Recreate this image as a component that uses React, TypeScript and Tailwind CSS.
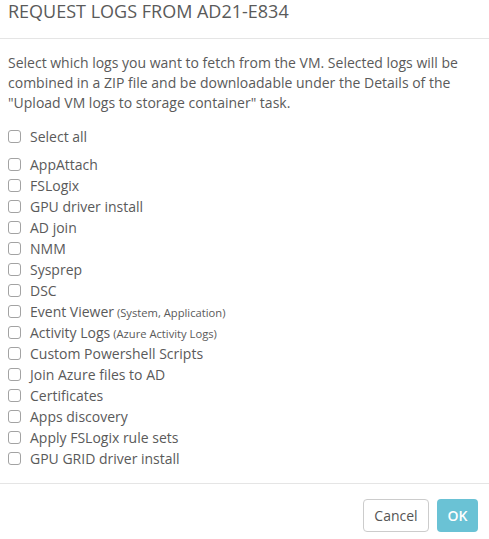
import React from "react";

const logs: { label: string; note?: string }[] = [
  { label: "AppAttach" },
  { label: "FSLogix" },
  { label: "GPU driver install" },
  { label: "AD join" },
  { label: "NMM" },
  { label: "Sysprep" },
  { label: "DSC" },
  { label: "Event Viewer", note: "(System, Application)" },
  { label: "Activity Logs", note: "(Azure Activity Logs)" },
  { label: "Custom Powershell Scripts" },
  { label: "Join Azure files to AD" },
  { label: "Certificates" },
  { label: "Apps discovery" },
  { label: "Apply FSLogix rule sets" },
  { label: "GPU GRID driver install" },
];

function CheckRow({ label, note }: { label: string; note?: string }) {
  return (
    <label className="flex items-center h-[21px] leading-[21px] cursor-pointer">
      <span className="w-[13px] h-[13px] shrink-0 rounded-[3px] border border-[#a3a3a3] bg-white" />
      <span className="ml-[9px] text-[14px] whitespace-nowrap">
        {label}
        {note && <span className="text-[11.2px]"> {note}</span>}
      </span>
    </label>
  );
}

export default function App() {
  return (
    <div
      className="w-[489px] h-[539px] bg-white text-[#5a5a5a] flex flex-col"
      style={{ fontFamily: '"Open Sans", "Liberation Sans", sans-serif' }}
    >
      <div className="h-[39px] px-[8px] pt-[1px] border-b border-[#e5e5e5] shrink-0">
        <h1 className="text-[18px] leading-[20px] font-normal">REQUEST LOGS FROM AD21-E834</h1>
      </div>

      <div className="px-[8px] pt-[14px] flex-1">
        <p className="text-[14px] leading-[20px]">
          Select which logs you want to fetch from the VM. Selected logs will be combined in a ZIP file and be
          downloadable under the Details of the "Upload VM logs to storage container" task.
        </p>
        <div className="mt-[13px] mb-[7px]">
          <CheckRow label="Select all" />
        </div>
        <div>
          {logs.map((l) => (
            <CheckRow key={l.label} label={l.label} note={l.note} />
          ))}
        </div>
      </div>

      <div className="h-[56px] border-t border-[#e5e5e5] flex justify-end items-start gap-[8px] pt-[15px] pr-[11px] shrink-0">
        <button className="w-[66px] h-[33px] rounded-[4px] border border-[#ccc] bg-white text-[14px] text-[#555]">
          Cancel
        </button>
        <button className="w-[41px] h-[33px] rounded-[4px] bg-[#6ac2d5] text-[14px] font-semibold text-white">
          OK
        </button>
      </div>
    </div>
  );
}
